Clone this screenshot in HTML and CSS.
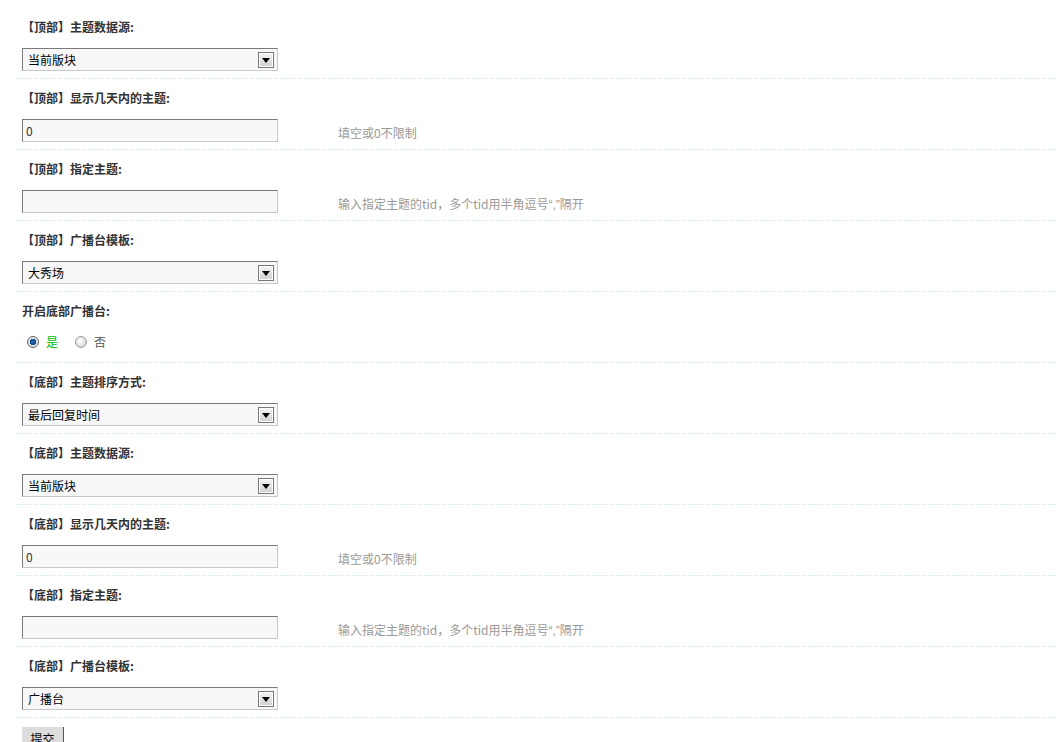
FILE: index.html
```html
<!DOCTYPE html>
<html lang="zh-CN">
<head>
  <meta charset="UTF-8" />
  <title>广播台设置</title>
  <link rel="stylesheet" href="styles.css">
</head>
<body>
  <form class="setting-form">
    <div class="row">
      <div class="row-title">【顶部】主题数据源:</div>
      <div class="row-field">
        <span class="select-wrap">
          <select class="select"><option>当前版块</option><option>全部版块</option></select>
          <span class="select-btn"><svg width="8" height="5" viewBox="0 0 8 5"><path d="M0 0h8L4 5z" fill="#000"/></svg></span>
        </span>
      </div>
    </div>

    <div class="row">
      <div class="row-title">【顶部】显示几天内的主题:</div>
      <div class="row-field">
        <input class="text" type="text" value="0">
        <span class="hint">填空或0不限制</span>
      </div>
    </div>

    <div class="row">
      <div class="row-title">【顶部】指定主题:</div>
      <div class="row-field">
        <input class="text" type="text" value="">
        <span class="hint">输入指定主题的tid，多个tid用半角逗号<span class="q">“,”</span>隔开</span>
      </div>
    </div>

    <div class="row">
      <div class="row-title">【顶部】广播台模板:</div>
      <div class="row-field">
        <span class="select-wrap">
          <select class="select"><option>大秀场</option><option>广播台</option></select>
          <span class="select-btn"><svg width="8" height="5" viewBox="0 0 8 5"><path d="M0 0h8L4 5z" fill="#000"/></svg></span>
        </span>
      </div>
    </div>

    <div class="row">
      <div class="row-title">开启底部广播台:</div>
      <div class="row-field radio-field">
        <label class="radio-item checked"><span class="radio on"></span>是</label>
        <label class="radio-item"><span class="radio"></span>否</label>
      </div>
    </div>

    <div class="row">
      <div class="row-title">【底部】主题排序方式:</div>
      <div class="row-field">
        <span class="select-wrap">
          <select class="select"><option>最后回复时间</option><option>发布时间</option></select>
          <span class="select-btn"><svg width="8" height="5" viewBox="0 0 8 5"><path d="M0 0h8L4 5z" fill="#000"/></svg></span>
        </span>
      </div>
    </div>

    <div class="row">
      <div class="row-title">【底部】主题数据源:</div>
      <div class="row-field">
        <span class="select-wrap">
          <select class="select"><option>当前版块</option><option>全部版块</option></select>
          <span class="select-btn"><svg width="8" height="5" viewBox="0 0 8 5"><path d="M0 0h8L4 5z" fill="#000"/></svg></span>
        </span>
      </div>
    </div>

    <div class="row">
      <div class="row-title">【底部】显示几天内的主题:</div>
      <div class="row-field">
        <input class="text" type="text" value="0">
        <span class="hint">填空或0不限制</span>
      </div>
    </div>

    <div class="row">
      <div class="row-title">【底部】指定主题:</div>
      <div class="row-field">
        <input class="text" type="text" value="">
        <span class="hint">输入指定主题的tid，多个tid用半角逗号<span class="q">“,”</span>隔开</span>
      </div>
    </div>

    <div class="row">
      <div class="row-title">【底部】广播台模板:</div>
      <div class="row-field">
        <span class="select-wrap">
          <select class="select"><option>广播台</option><option>大秀场</option></select>
          <span class="select-btn"><svg width="8" height="5" viewBox="0 0 8 5"><path d="M0 0h8L4 5z" fill="#000"/></svg></span>
        </span>
      </div>
    </div>

    <div class="actions">
      <button class="btn" type="submit">提交</button>
    </div>
  </form>
</body>
</html>
```

FILE: styles.css
```css
body {
  margin: 0;
  background: #fff;
  font-family: "Noto Sans CJK SC", "Liberation Sans", sans-serif;
  font-size: 12px;
  color: #333;
}

.setting-form {
  margin: 8px 2px 0 16px;
}

.row {
  padding: 10px 0 8px 6px;
  background-image: linear-gradient(to right, #b8dede 1px, transparent 1px);
  background-size: 3px 1px;
  background-repeat: repeat-x;
  background-position: left bottom;
}

.row-title {
  height: 18px;
  line-height: 18px;
  font-weight: bold;
  color: #333;
}

.row-field {
  display: flex;
  align-items: center;
  height: 23px;
  margin-top: 12px;
}

.radio-field {
  align-items: flex-start;
  box-sizing: border-box;
  padding-top: 1px;
}

.select-wrap {
  position: relative;
  display: inline-block;
  width: 256px;
  height: 23px;
}

.select {
  appearance: none;
  -webkit-appearance: none;
  width: 256px;
  height: 23px;
  margin: 0;
  padding: 0 0 0 5px;
  border: 1px solid #c8c8c8;
  border-top-color: #7a7a7a;
  border-left-color: #7a7a7a;
  border-radius: 0;
  background: #f7f7f7;
  font-family: inherit;
  font-size: 12px;
  color: #000;
  outline: none;
}

.select-btn {
  position: absolute;
  top: 4px;
  right: 4px;
  width: 14px;
  height: 14px;
  border: 1px solid #777;
  box-shadow: inset 0 0 0 1px #fff;
  background: linear-gradient(#f4f4f4, #cfcfcf);
  display: flex;
  align-items: center;
  justify-content: center;
  pointer-events: none;
}

.text {
  box-sizing: border-box;
  width: 256px;
  height: 23px;
  margin: 0;
  padding: 0 3px;
  border: 1px solid #c8c8c8;
  border-top-color: #7a7a7a;
  border-left-color: #7a7a7a;
  background: #f8f8f8;
  font-family: inherit;
  font-size: 12px;
  color: #333;
  outline: none;
}

.hint {
  margin-left: 60px;
  padding-top: 4px;
  color: #999;
}

.q {
  font-family: "Liberation Sans", sans-serif;
}

.radio-item {
  display: inline-flex;
  align-items: center;
  margin-left: 5px;
  margin-right: 12px;
  color: #555;
}

.radio-item.checked {
  color: #0b0;
}

.radio {
  box-sizing: border-box;
  display: inline-block;
  width: 12px;
  height: 12px;
  margin-right: 7px;
  border: 1px solid #999;
  border-radius: 50%;
  background: radial-gradient(circle at 40% 40%, #fff, #ccc);
}

.radio.on {
  border-color: #666;
  background: radial-gradient(circle, #2b6fb8 0, #0b4a8c 3px, #e8e8e8 3.5px, #d0d0d0 6px);
}

.actions {
  padding: 9px 0 0 6px;
}

.btn {
  width: 42px;
  height: 24px;
  padding: 0;
  border: 0;
  border-right: 1px solid #555;
  border-bottom: 1px solid #555;
  background: #ddd;
  font-family: inherit;
  font-size: 12px;
  color: #000;
}
```
